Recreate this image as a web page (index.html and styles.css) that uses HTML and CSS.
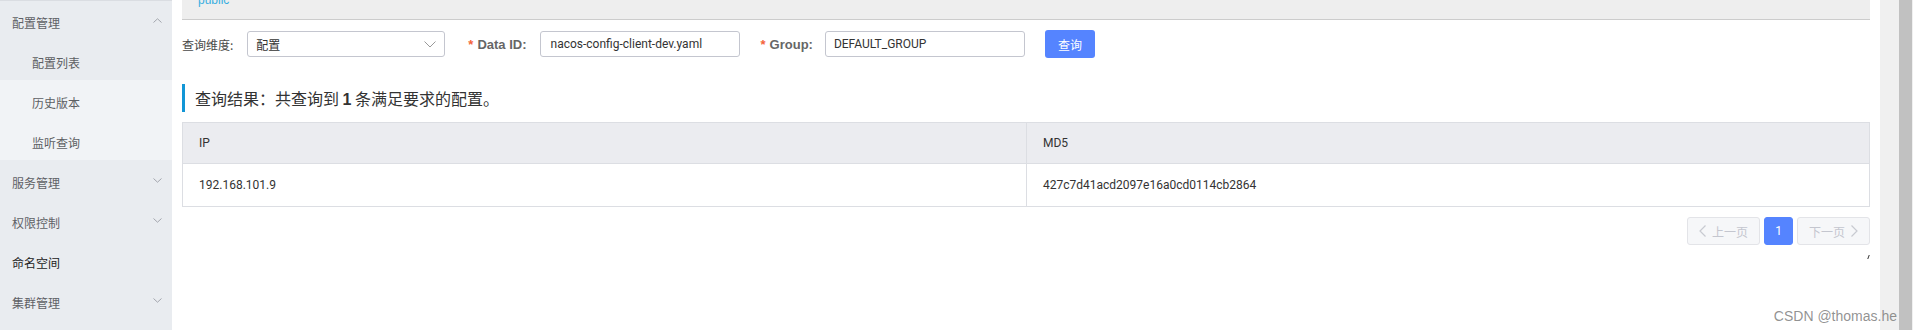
FILE: index.html
```html
<!DOCTYPE html>
<html lang="zh">
<head>
<meta charset="utf-8">
<title>配置管理</title>
<link rel="stylesheet" href="styles.css">
</head>
<body>
<div class="app">
  <aside class="sidebar">
    <div class="menu-item group">配置管理<svg class="chev" width="9" height="5" viewBox="0 0 9 5"><polyline points="0.5,4.5 4.5,0.8 8.5,4.5" fill="none" stroke="#a3a6ad" stroke-width="1"/></svg></div>
    <div class="menu-item sub active">配置列表</div>
    <div class="menu-item sub">历史版本</div>
    <div class="menu-item sub">监听查询</div>
    <div class="menu-item group">服务管理<svg class="chev" width="9" height="5" viewBox="0 0 9 5"><polyline points="0.5,0.5 4.5,4.2 8.5,0.5" fill="none" stroke="#a3a6ad" stroke-width="1"/></svg></div>
    <div class="menu-item group">权限控制<svg class="chev" width="9" height="5" viewBox="0 0 9 5"><polyline points="0.5,0.5 4.5,4.2 8.5,0.5" fill="none" stroke="#a3a6ad" stroke-width="1"/></svg></div>
    <div class="menu-item group link">命名空间</div>
    <div class="menu-item group">集群管理<svg class="chev" width="9" height="5" viewBox="0 0 9 5"><polyline points="0.5,0.5 4.5,4.2 8.5,0.5" fill="none" stroke="#a3a6ad" stroke-width="1"/></svg></div>
  </aside>

  <main class="main">
    <div class="ns-bar"><span class="ns-name">public</span></div>

    <div class="search">
      <span class="label">查询维度:</span>
      <div class="select">
        <span>配置</span>
        <svg width="12" height="7" viewBox="0 0 12 7"><polyline points="0.5,0.5 6,6 11.5,0.5" fill="none" stroke="#999" stroke-width="1"/></svg>
      </div>
      <span class="label req lab-data"><i>*</i>Data ID:</span>
      <div class="input">nacos-config-client-dev.yaml</div>
      <span class="label req lab-group"><i>*</i>Group:</span>
      <div class="input input-group">DEFAULT_GROUP</div>
      <button class="btn">查询</button>
    </div>

    <div class="result-title">查询结果：共查询到 <b>1</b> 条满足要求的配置。</div>

    <div class="table">
      <div class="th">IP</div>
      <div class="th col2">MD5</div>
      <div class="td">192.168.101.9</div>
      <div class="td col2">427c7d41acd2097e16a0cd0114cb2864</div>
    </div>

    <div class="pagination">
      <div class="pg-btn disabled"><svg width="7" height="12" viewBox="0 0 7 12"><polyline points="6.5,0.5 1,6 6.5,11.5" fill="none" stroke="#c8cad1" stroke-width="1.2"/></svg><span>上一页</span></div>
      <div class="pg-btn current">1</div>
      <div class="pg-btn disabled"><span>下一页</span><svg width="7" height="12" viewBox="0 0 7 12"><polyline points="0.5,0.5 6,6 0.5,11.5" fill="none" stroke="#c8cad1" stroke-width="1.2"/></svg></div>
    </div>
    <div class="tick-row"><span class="tick"></span></div>
  </main>

  <div class="scrollbar"><div class="thumb"></div></div>
</div>
<div class="watermark">CSDN @thomas.he</div>
</body>
</html>
```

FILE: styles.css
```css
* { box-sizing: border-box; }
html, body { margin: 0; padding: 0; }
body {
  width: 1913px;
  height: 330px;
  overflow: hidden;
  background: #fff;
  font-family: Roboto, "Noto Sans CJK SC", sans-serif;
  font-size: 12px;
  color: #333;
  position: relative;
}
.app {
  display: flex;
  height: 330px;
}

/* sidebar */
.sidebar {
  width: 172px;
  flex: none;
  background: #e9ecf0;
  box-shadow: inset 0 1px 0 #dadde2;
  font-family: "Noto Sans CJK SC", sans-serif;
  font-size: 12px;
}
.menu-item {
  height: 40px;
  display: flex;
  align-items: center;
  justify-content: space-between;
  padding: 5px 10px 0 12px;
  color: #5f6166;
}
.menu-item .chev { margin-top: -5px; }
.menu-item.sub {
  padding-left: 32px;
  background: #f1f3f6;
  color: #5d5f63;
}
.menu-item.sub.active { background: #e9ecf0; }
.menu-item.link { color: #222; }

/* main */
.main {
  flex: 1;
  padding: 0 10px;
  min-width: 0;
}
.ns-bar {
  height: 20px;
  background: #eeeeee;
  border-bottom: 1px solid #cccccc;
  padding-left: 16px;
  overflow: hidden;
}
.ns-name {
  display: block;
  margin-top: -6px;
  line-height: 12px;
  font-family: "Liberation Sans", sans-serif;
  font-size: 12px;
  color: #3aaee0;
}

.search {
  display: flex;
  align-items: center;
  height: 28px;
  margin-top: 10px;
}
.label {
  font-family: "Noto Sans CJK SC", sans-serif;
  color: #4a4a4a;
  font-size: 12px;
  margin-right: 14px;
}
.label.req {
  font-family: "Liberation Sans", "Noto Sans CJK SC", sans-serif;
  font-weight: bold;
  font-size: 13px;
  color: #666;
  margin-right: 13px;
}
.label.req i {
  font-style: normal;
  color: #f4633a;
  margin-right: 4px;
}
.lab-data { margin-left: 23px; }
.lab-group { margin-left: 21px; margin-right: 12px !important; }
.select {
  width: 198px;
  height: 26px;
  border: 1px solid #c4c6cf;
  border-radius: 3px;
  display: flex;
  align-items: center;
  justify-content: space-between;
  padding: 0 8px 0 8px;
  font-family: "Noto Sans CJK SC", sans-serif;
  color: #333;
}
.input {
  width: 200px;
  height: 26px;
  border: 1px solid #c4c6cf;
  border-radius: 3px;
  display: flex;
  align-items: center;
  padding-left: 10px;
  font-family: Roboto, sans-serif;
  color: #333;
}
.input-group { padding-left: 8px; }
.btn {
  margin-left: 20px;
  width: 50px;
  height: 28px;
  border: none;
  border-radius: 3px;
  background: #5584ff;
  color: #fff;
  font-family: "Noto Sans CJK SC", sans-serif;
  font-size: 12px;
  padding: 0;
}

.result-title {
  margin-top: 26px;
  height: 28px;
  line-height: 28px;
  border-left: 3px solid #1296d6;
  padding-left: 10px;
  font-family: "Noto Sans CJK SC", sans-serif;
  font-size: 16px;
  color: #333;
}
.result-title b { font-family: "Liberation Sans", sans-serif; }

.table {
  margin-top: 10px;
  display: grid;
  grid-template-columns: 1fr 1fr;
  border: 1px solid #dcdee3;
  font-family: Roboto, sans-serif;
  font-size: 12px;
  color: #333;
}
.th {
  height: 41px;
  background: #ebecf0;
  border-bottom: 1px solid #dcdee3;
  display: flex;
  align-items: center;
  padding-left: 16px;
}
.td {
  height: 42px;
  display: flex;
  align-items: center;
  padding-left: 16px;
}
.col2 { border-left: 1px solid #dcdee3; }

.pagination {
  display: flex;
  justify-content: flex-end;
  gap: 4px;
  margin-top: 10px;
}
.pg-btn {
  height: 28px;
  width: 73px;
  border: 1px solid #e3e4e8;
  border-radius: 3px;
  background: #f6f7f9;
  display: flex;
  align-items: center;
  justify-content: center;
  gap: 6px;
  font-family: "Noto Sans CJK SC", sans-serif;
  font-size: 12px;
  color: #c4c6cf;
}
.pg-btn.current {
  width: 29px;
  background: #5584ff;
  border-color: #5584ff;
  color: #fff;
  font-family: Roboto, sans-serif;
}
.tick-row {
  display: flex;
  justify-content: flex-end;
  padding-right: 1px;
  margin-top: 10px;
}
.tick {
  width: 1px;
  height: 4px;
  background: #333;
  transform: skewX(-20deg);
}

.scrollbar {
  width: 33px;
  flex: none;
  background: #f0f0f0;
  padding-left: 19px;
  padding-right: 1px;
}
.thumb {
  height: 100%;
  background: #c1c1c1;
}

.watermark {
  position: absolute;
  right: 16px;
  bottom: 6px;
  font-family: "Liberation Sans", sans-serif;
  font-size: 14px;
  color: rgba(110, 110, 110, 0.75);
}
```
